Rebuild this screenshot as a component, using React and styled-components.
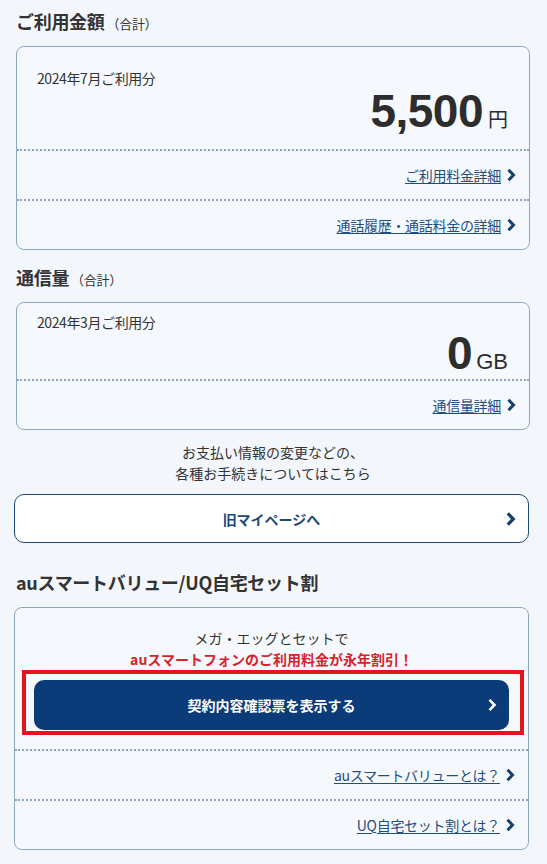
import styled, { createGlobalStyle } from 'styled-components';

const GlobalStyle = createGlobalStyle`
  body {
    margin: 0;
    background: #f3f7fc;
    color: #333;
    font-family: "Noto Sans CJK JP", "Noto Sans", sans-serif;
  }
`;

const Page = styled.div`
  padding: 9px 17px 16px 16px;
`;

const SectionTitle = styled.h2`
  display: flex;
  align-items: baseline;
  height: 24px;
  margin: ${(props) => props.$top || 0}px 0 13px;
  font-size: 18px;
  line-height: 24px;
  font-weight: bold;
  color: #333;
  letter-spacing: -0.3px;
`;

const Small = styled.span`
  font-size: 13px;
  line-height: 1;
  font-weight: normal;
  margin-left: 2px;
`;

const Card = styled.div`
  border: 1px solid #8ea6bf;
  border-radius: 8px;
  background: #f5f9fd;
  margin: ${(props) => (props.$wide ? '0 1px 0 -2px' : '0')};
`;

const Summary = styled.div`
  padding: ${(props) => (props.$compact ? '9px 21px 3px 20px' : '21px 21px 15px 20px')};
`;

const Period = styled.div`
  font-size: 14px;
  line-height: 20px;
  height: 20px;
  color: #333;
  letter-spacing: -0.4px;
`;

const Amount = styled.div`
  display: flex;
  justify-content: flex-end;
  align-items: baseline;
  height: 46px;
  margin-top: ${(props) => (props.$compact ? '-2px' : '0')};
  font-family: "Liberation Sans", Arial, sans-serif;
  line-height: 46px;
  color: #2d2d2d;
`;

const Number = styled.span`
  font-size: 46px;
  line-height: 46px;
  font-weight: bold;
  letter-spacing: -0.5px;
`;

const Unit = styled.span`
  font-size: ${(props) => (props.$cjk ? '20px' : '22px')};
  line-height: 1;
  margin-left: ${(props) => (props.$cjk ? '5px' : '4px')};
  font-family: ${(props) => (props.$cjk ? '"Noto Sans CJK JP", sans-serif' : '"Liberation Sans", Arial, sans-serif')};
`;

const LinkRow = styled.div`
  height: 50px;
  box-sizing: border-box;
  border-top: 2px dotted #8ea6bf;
  display: flex;
  align-items: center;
  justify-content: flex-end;
  padding-right: 13px;
  gap: 5px;
`;

const LinkText = styled.a`
  font-size: 14px;
  color: #1f4e80;
  text-decoration: underline;
  text-underline-offset: 2px;
  letter-spacing: -0.3px;
`;

const Notice = styled.p`
  margin: 12px 0 10px;
  text-align: center;
  font-size: 14px;
  line-height: 21px;
  color: #333;
`;

const OutlineButton = styled.div`
  height: 49px;
  box-sizing: border-box;
  margin: 0 1px 0 -2px;
  border: 1px solid #1c4a78;
  border-radius: 10px;
  background: #fff;
  display: flex;
  align-items: center;
  justify-content: center;
  position: relative;
  font-size: 14px;
  font-weight: bold;
  color: #1c4a78;
`;

const ChevronSlot = styled.span`
  position: absolute;
  right: ${(props) => props.$right}px;
  top: 50%;
  transform: translateY(-50%);
  display: flex;
`;

const Promo = styled.div`
  padding-top: 20px;
  text-align: center;
  font-size: 14px;
  line-height: 21px;
`;

const PromoRed = styled.div`
  color: #d7232b;
  font-weight: bold;
`;

const Highlight = styled.div`
  margin: 0 4px 14px 7px;
  border: 4px solid #e2141f;
  padding: 6px 11px 1px 8px;
`;

const PrimaryButton = styled.div`
  height: 50px;
  border-radius: 10px;
  background: #0b3c79;
  display: flex;
  align-items: center;
  justify-content: center;
  position: relative;
  color: #fff;
  font-size: 14px;
  font-weight: bold;
`;

function Chevron({ color = '#1a3f6a', w = 10, h = 14, stroke = 3 }) {
  return (
    <svg width={w} height={h} viewBox="0 0 10 14">
      <polyline points="2.5,1.8 7.5,7 2.5,12.2" fill="none" stroke={color} strokeWidth={stroke} strokeLinejoin="miter" />
    </svg>
  );
}

function Link({ children }) {
  return (
    <LinkRow>
      <LinkText>{children}</LinkText>
      <Chevron />
    </LinkRow>
  );
}

export default function App() {
  return (
    <Page>
      <GlobalStyle />
      <SectionTitle>
        ご利用金額<Small>（合計）</Small>
      </SectionTitle>
      <Card>
        <Summary>
          <Period>2024年7月ご利用分</Period>
          <Amount>
            <Number>5,500</Number>
            <Unit $cjk>円</Unit>
          </Amount>
        </Summary>
        <Link>ご利用料金詳細</Link>
        <Link>通話履歴・通話料金の詳細</Link>
      </Card>

      <SectionTitle $top={15}>
        通信量<Small>（合計）</Small>
      </SectionTitle>
      <Card>
        <Summary $compact>
          <Period>2024年3月ご利用分</Period>
          <Amount $compact>
            <Number>0</Number>
            <Unit>GB</Unit>
          </Amount>
        </Summary>
        <Link>通信量詳細</Link>
      </Card>

      <Notice>
        お支払い情報の変更などの、
        <br />
        各種お手続きについてはこちら
      </Notice>
      <OutlineButton>
        旧マイページへ
        <ChevronSlot $right={12}>
          <Chevron w={11} h={16} />
        </ChevronSlot>
      </OutlineButton>

      <SectionTitle $top={27}>auスマートバリュー/UQ自宅セット割</SectionTitle>
      <Card $wide>
        <Promo>
          メガ・エッグとセットで
          <PromoRed>auスマートフォンのご利用料金が永年割引！</PromoRed>
        </Promo>
        <Highlight>
          <PrimaryButton>
            契約内容確認票を表示する
            <ChevronSlot $right={12}>
              <Chevron color="#fff" w={10} h={15} stroke={2.6} />
            </ChevronSlot>
          </PrimaryButton>
        </Highlight>
        <Link>auスマートバリューとは？</Link>
        <Link>UQ自宅セット割とは？</Link>
      </Card>
    </Page>
  );
}
